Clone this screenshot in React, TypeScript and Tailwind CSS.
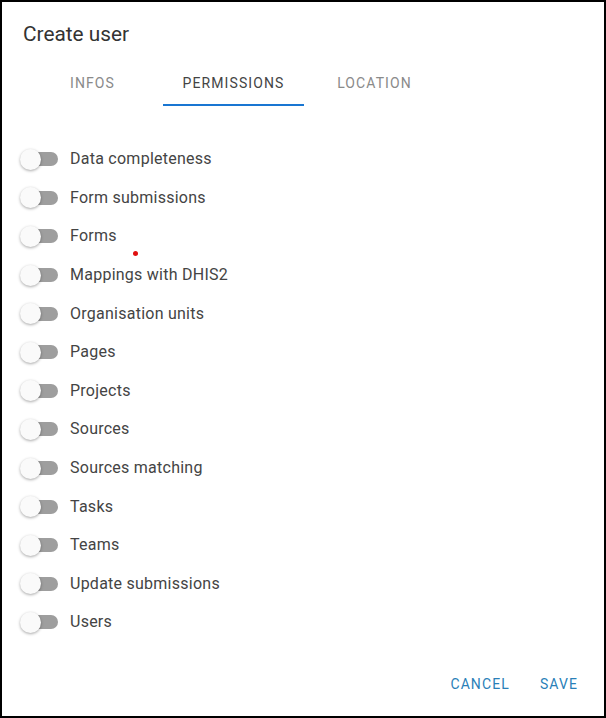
import React from "react";

const items = [
  "Data completeness",
  "Form submissions",
  "Forms",
  "Mappings with DHIS2",
  "Organisation units",
  "Pages",
  "Projects",
  "Sources",
  "Sources matching",
  "Tasks",
  "Teams",
  "Update submissions",
  "Users",
];

function Switch() {
  return (
    <div className="relative w-[40px] h-[22px] flex items-center">
      <div className="absolute left-[10px] w-[28px] h-[14px] rounded-full bg-[#9e9e9e]" />
      <div className="absolute left-0 w-[21px] h-[21px] rounded-full bg-[#fafafa] shadow-[0_1px_3px_rgba(0,0,0,0.35)]" />
    </div>
  );
}

export default function App() {
  return (
    <div
      className="w-[606px] h-[718px] border-2 border-black bg-white flex flex-col relative"
      style={{ fontFamily: "Roboto, 'Liberation Sans', sans-serif" }}
    >
      <div className="pl-[21px] pt-[20px] text-[20.8px] leading-[24px] text-[#333]">Create user</div>
      <div className="flex pl-[20px] mt-[15px]">
        <div className="w-[141px] h-[45px] flex items-start pt-[12px] justify-center text-[14px] tracking-[1.1px] text-[#8a8a8a]">INFOS</div>
        <div className="w-[141px] h-[45px] flex items-start pt-[12px] justify-center text-[14px] tracking-[1.1px] text-[#444] border-b-2 border-[#1976d2]">PERMISSIONS</div>
        <div className="w-[141px] h-[45px] flex items-start pt-[12px] justify-center text-[14px] tracking-[1.1px] text-[#8a8a8a]">LOCATION</div>
      </div>
      <div className="flex flex-col pl-[18px] mt-[34px]">
        {items.map((t) => (
          <div key={t} className="h-[38.6px] flex items-center gap-[10px]">
            <Switch />
            <span className="text-[16px] tracking-[0.25px] text-[#444]">{t}</span>
          </div>
        ))}
      </div>
      <div className="absolute left-[131px] top-[249px] w-[5px] h-[5px] rounded-full bg-[#e01010]" />
      <div className="mt-auto flex justify-end items-center gap-[30px] pr-[26px] pb-[21px] text-[14px] tracking-[1.1px] text-[#2a7fb8]">
        <span>CANCEL</span>
        <span>SAVE</span>
      </div>
    </div>
  );
}
